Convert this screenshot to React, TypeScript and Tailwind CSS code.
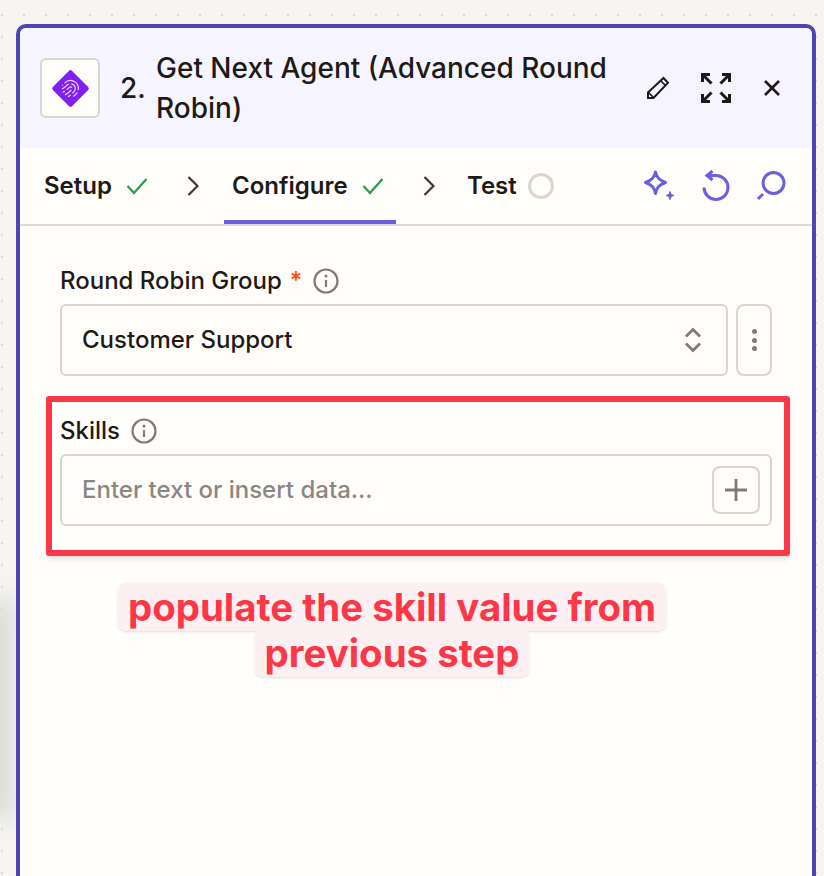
import React from 'react';
import { Fingerprint } from 'lucide-react';

function InfoIcon() {
  return (
    <svg width="26" height="26" viewBox="0 0 26 26" fill="none" className="shrink-0">
      <circle cx="13" cy="13" r="11.5" stroke="#7f7c76" strokeWidth="2.2" />
      <circle cx="13" cy="8" r="1.5" fill="#7f7c76" />
      <path d="M13 12v7" stroke="#7f7c76" strokeWidth="2.2" />
    </svg>
  );
}

function Check() {
  return (
    <svg width="22" height="18" viewBox="0 0 22 18" fill="none" className="shrink-0">
      <path d="M1.5 9l6.5 7L20.5 2" stroke="#2f9e50" strokeWidth="2.4" />
    </svg>
  );
}

function TabChevron() {
  return (
    <svg width="12" height="20" viewBox="0 0 12 20" fill="none" className="shrink-0">
      <path d="M1.5 1l9 9-9 9" stroke="#3a3633" strokeWidth="2.2" />
    </svg>
  );
}

export default function App() {
  return (
    <div className="relative h-[876px] w-[824px] overflow-hidden bg-[#f6f5f2] bg-[radial-gradient(circle,#dddbd5_1.2px,transparent_1.6px)] bg-[length:22px_22px] bg-[position:13px_4px] pt-6 pl-4 pr-2 font-['Inter',sans-serif] text-[#1f1a17]">
      {/* soft shadow of the node behind the panel */}
      <div className="absolute left-[-20px] top-[600px] h-[220px] w-[36px] bg-[#dcdcda] blur-md"></div>

      <div className="relative h-[900px] overflow-hidden rounded-[10px] border-4 border-[#4f44b5] bg-[#fffefb]">
        {/* Header */}
        <div className="flex h-[120px] items-center bg-[#f6f5ff] pl-5">
          <div className="flex h-[60px] w-[60px] shrink-0 items-center justify-center rounded-md border-2 border-[#d9d6cc] bg-[#fffefb]">
            <div className="flex h-[27px] w-[27px] rotate-45 items-center justify-center rounded-[2px] bg-[#7f1ff2]">
              <Fingerprint size={19} color="#f0d8ff" strokeWidth={1.5} />
            </div>
          </div>
          <span className="ml-[20px] w-[36px] shrink-0 text-[28px] font-medium leading-10">2.</span>
          <div className="w-[470px] shrink-0 text-[28px] font-medium leading-10">Get Next Agent (Advanced Round Robin)</div>
          <div className="ml-[20px] flex items-center">
            <svg width="24" height="24" viewBox="0 0 24 24" fill="none">
              <path d="M2 22v-5.500L17.500 2 22 6.800 7.500 22z" stroke="#1f1a17" strokeWidth="2" />
              <path d="M2.500 16.500l5 5M15 5l4.500 4.500" stroke="#1f1a17" strokeWidth="1.600" />
            </svg>
            <svg width="30" height="30" viewBox="0 0 30 30" fill="none" className="ml-[31px]">
              <path d="M1.500 9V1.500H9M1.500 1.500l9 9M21 1.500h7.500V9M28.500 1.500l-9 9M1.500 21v7.500H9M1.500 28.500l9-9M28.500 21v7.500H21M28.500 28.500l-9-9" stroke="#1f1a17" strokeWidth="3" />
            </svg>
            <svg width="18" height="18" viewBox="0 0 18 18" fill="none" className="ml-[32px]">
              <path d="M2 2l14 14M16 2L2 16" stroke="#1f1a17" strokeWidth="2.600" />
            </svg>
          </div>
        </div>

        {/* Steps */}
        <div className="flex h-[78px] items-stretch border-b-2 border-[#dedbd2] pl-6 text-[24px] font-semibold">
          <div className="flex items-center">
            <span>Setup</span>
            <span className="ml-[14px]"><Check /></span>
            <span className="ml-[39px]"><TabChevron /></span>
          </div>
          <div className="ml-[25px] flex h-[76px] w-[172px] items-center border-b-4 border-[#6a5fe0] pl-2 pt-1">
            <span>Configure</span>
            <span className="ml-[14px]"><Check /></span>
          </div>
          <div className="ml-[27px] flex items-center">
            <TabChevron />
            <span className="ml-[32px]">Test</span>
            <span className="ml-[11px] h-[26px] w-[26px] rounded-full border-[3px] border-[#d9d6cc]"></span>
          </div>
          <div className="ml-[88px] flex items-center">
            <svg width="34" height="34" viewBox="0 0 34 34" fill="none">
              <path d="M13.500 3c1.500 6 3.500 8 10 10.500-6.500 2.500-8.500 4.500-10 11-1.500-6.500-3.500-8.500-10-11 6.500-2.500 8.500-4.500 10-10.500z" stroke="#6a5fe0" strokeWidth="3" strokeLinejoin="round" />
              <path d="M28 22.500c.6 2.500 1.500 3.500 4 4-2.500.6-3.400 1.500-4 4-.6-2.500-1.500-3.400-4-4 2.500-.5 3.400-1.500 4-4z" fill="#6a5fe0" stroke="#6a5fe0" strokeWidth="1" />
            </svg>
            <svg width="30" height="32" viewBox="0 0 30 32" fill="none" className="ml-[25px]">
              <path d="M8 5.500h7.500a12 12 0 1 1-12.500 12" stroke="#6a5fe0" strokeWidth="3" />
              <path d="M11.500 1L6 5.500l5.500 4.500" stroke="#6a5fe0" strokeWidth="3" />
            </svg>
            <svg width="30" height="30" viewBox="0 0 30 30" fill="none" className="ml-[25px]">
              <circle cx="17.500" cy="12" r="10.500" stroke="#6a5fe0" strokeWidth="3" />
              <path d="M7 23l-5 5" stroke="#6a5fe0" strokeWidth="3" />
            </svg>
          </div>
        </div>

        {/* Form */}
        <div className="px-10 pt-[39px]">
          <div className="flex h-8 items-center text-[24px] font-medium">
            <span>Round Robin Group</span>
            <span className="ml-2 text-[24px] text-[#ff4f00]">*</span>
            <span className="ml-[11px]"><InfoIcon /></span>
          </div>
          <div className="mt-[7px] flex gap-2">
            <div className="flex h-[72px] flex-1 items-center justify-between rounded-md border-2 border-[#d9d6cc] pl-5 pr-6 text-[24px] font-medium">
              <span>Customer Support</span>
              <svg width="18" height="26" viewBox="0 0 18 26" fill="none">
                <path d="M2 9.500l7-7 7 7M2 16.500l7 7 7-7" stroke="#7f7c76" strokeWidth="2.800" />
              </svg>
            </div>
            <div className="flex h-[72px] w-9 flex-col items-center justify-center gap-[3.500px] rounded-lg border-2 border-[#d9d6cc]">
              <span className="h-[5px] w-[5px] rounded-full bg-[#7f7c76]"></span>
              <span className="h-[5px] w-[5px] rounded-full bg-[#7f7c76]"></span>
              <span className="h-[5px] w-[5px] rounded-full bg-[#7f7c76]"></span>
            </div>
          </div>

          <div className="-ml-[14px] -mr-[18px] mt-5 rounded-[3px] border-[6px] border-[#fb3748] pb-6 pl-2 pr-3 pt-[13px] shadow-md">
            <div className="flex h-8 items-center text-[24px] font-medium">
              <span>Skills</span>
              <span className="ml-[11px]"><InfoIcon /></span>
            </div>
            <div className="mt-[7px] flex h-[72px] items-center justify-between rounded-md border-2 border-[#d9d6cc] pl-5 pr-[10px]">
              <span className="text-[24px] font-medium text-[#8a8782]">Enter text or insert data...</span>
              <div className="flex h-12 w-12 items-center justify-center rounded-lg border-2 border-[#d9d6cc]">
                <svg width="22" height="22" viewBox="0 0 22 22" fill="none">
                  <path d="M11 0v22M0 11h22" stroke="#7f7c76" strokeWidth="2.800" />
                </svg>
              </div>
            </div>
          </div>
        </div>

        {/* Annotation */}
        <div className="ml-[52px] mt-7 w-[640px] text-center text-[38.400px] font-bold leading-[46px] text-[#fb3748]">
          <span className="rounded-lg bg-[#fdf0f3] box-decoration-clone px-[10px] py-px shadow-sm">
            populate the skill value from
            <br />
            previous step
          </span>
        </div>
      </div>
    </div>
  );
}
